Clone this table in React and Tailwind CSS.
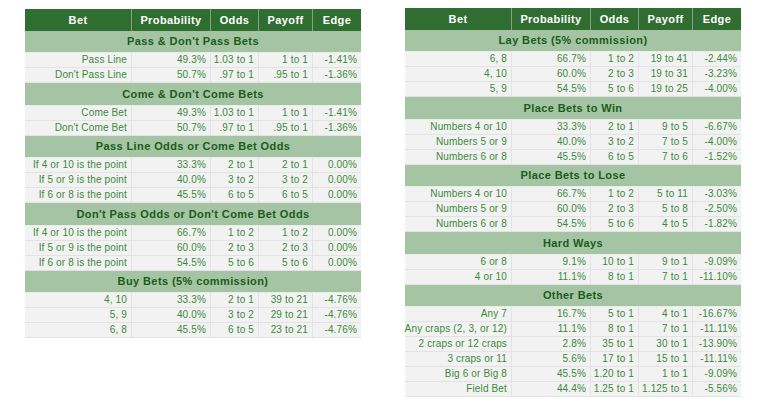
import React from "react";

const left = [
  {
    title: "Pass & Don't Pass Bets",
    rows: [
      ["Pass Line", "49.3%", "1.03 to 1", "1 to 1", "-1.41%"],
      ["Don't Pass Line", "50.7%", ".97 to 1", ".95 to 1", "-1.36%"],
    ],
  },
  {
    title: "Come & Don't Come Bets",
    rows: [
      ["Come Bet", "49.3%", "1.03 to 1", "1 to 1", "-1.41%"],
      ["Don't Come Bet", "50.7%", ".97 to 1", ".95 to 1", "-1.36%"],
    ],
  },
  {
    title: "Pass Line Odds or Come Bet Odds",
    rows: [
      ["If 4 or 10 is the point", "33.3%", "2 to 1", "2 to 1", "0.00%"],
      ["If 5 or 9 is the point", "40.0%", "3 to 2", "3 to 2", "0.00%"],
      ["If 6 or 8 is the point", "45.5%", "6 to 5", "6 to 5", "0.00%"],
    ],
  },
  {
    title: "Don't Pass Odds or Don't Come Bet Odds",
    rows: [
      ["If 4 or 10 is the point", "66.7%", "1 to 2", "1 to 2", "0.00%"],
      ["If 5 or 9 is the point", "60.0%", "2 to 3", "2 to 3", "0.00%"],
      ["If 6 or 8 is the point", "54.5%", "5 to 6", "5 to 6", "0.00%"],
    ],
  },
  {
    title: "Buy Bets (5% commission)",
    rows: [
      ["4, 10", "33.3%", "2 to 1", "39 to 21", "-4.76%"],
      ["5, 9", "40.0%", "3 to 2", "29 to 21", "-4.76%"],
      ["6, 8", "45.5%", "6 to 5", "23 to 21", "-4.76%"],
    ],
  },
];

const right = [
  {
    title: "Lay Bets (5% commission)",
    rows: [
      ["6, 8", "66.7%", "1 to 2", "19 to 41", "-2.44%"],
      ["4, 10", "60.0%", "2 to 3", "19 to 31", "-3.23%"],
      ["5, 9", "54.5%", "5 to 6", "19 to 25", "-4.00%"],
    ],
  },
  {
    title: "Place Bets to Win",
    rows: [
      ["Numbers 4 or 10", "33.3%", "2 to 1", "9 to 5", "-6.67%"],
      ["Numbers 5 or 9", "40.0%", "3 to 2", "7 to 5", "-4.00%"],
      ["Numbers 6 or 8", "45.5%", "6 to 5", "7 to 6", "-1.52%"],
    ],
  },
  {
    title: "Place Bets to Lose",
    rows: [
      ["Numbers 4 or 10", "66.7%", "1 to 2", "5 to 11", "-3.03%"],
      ["Numbers 5 or 9", "60.0%", "2 to 3", "5 to 8", "-2.50%"],
      ["Numbers 6 or 8", "54.5%", "5 to 6", "4 to 5", "-1.82%"],
    ],
  },
  {
    title: "Hard Ways",
    rows: [
      ["6 or 8", "9.1%", "10 to 1", "9 to 1", "-9.09%"],
      ["4 or 10", "11.1%", "8 to 1", "7 to 1", "-11.10%"],
    ],
  },
  {
    title: "Other Bets",
    rows: [
      ["Any 7", "16.7%", "5 to 1", "4 to 1", "-16.67%"],
      ["Any craps (2, 3, or 12)", "11.1%", "8 to 1", "7 to 1", "-11.11%"],
      ["2 craps or 12 craps", "2.8%", "35 to 1", "30 to 1", "-13.90%"],
      ["3 craps or 11", "5.6%", "17 to 1", "15 to 1", "-11.11%"],
      ["Big 6 or Big 8", "45.5%", "1.20 to 1", "1 to 1", "-9.09%"],
      ["Field Bet", "44.4%", "1.25 to 1", "1.125 to 1", "-5.56%"],
    ],
  },
];

const cols = "grid grid-cols-[107px_79px_48px_54px_48px]";
const headers = ["Bet", "Probability", "Odds", "Payoff", "Edge"];

function Table({ sections }) {
  return (
    <div className="w-[336px] flex flex-col">
      <div className={`${cols} h-[22px] bg-[#306d31]`}>
        {headers.map((h, i) => (
          <div
            key={h}
            className={`flex items-center justify-center text-white font-bold text-[11px] tracking-[0.4px] ${
              i < 4 ? "border-r border-[#7fa47f]" : ""
            }`}
          >
            {h}
          </div>
        ))}
      </div>
      {sections.map((s) => (
        <div key={s.title} className="flex flex-col">
          <div className="h-[22.4px] bg-[#a5c4a3] flex items-center justify-center text-[#185e1a] font-bold text-[11px] tracking-[0.4px] border-b border-[#e8efe6]">
            {s.title}
          </div>
          {s.rows.map((r, ri) => (
            <div
              key={ri}
              className={`${cols} h-[15px] bg-[#f2f2f2] border-b border-[#e3e3e3]`}
            >
              {r.map((c, ci) => (
                <div
                  key={ci}
                  className={`flex items-center justify-end pr-[4px] text-[10px] leading-none tracking-[0.15px] text-[#3b8a3b] whitespace-nowrap ${
                    ci < 4 ? "border-r border-[#e3e3e3]" : ""
                  }`}
                >
                  {c}
                </div>
              ))}
            </div>
          ))}
        </div>
      ))}
    </div>
  );
}

export default function App() {
  return (
    <div
      className="w-[768px] h-[405px] bg-white flex items-start gap-[44px] pl-[25px] pt-[8px]"
      style={{ fontFamily: '"Liberation Sans", Arial, sans-serif' }}
    >
      <div className="mt-[1px]">
        <Table sections={left} />
      </div>
      <Table sections={right} />
    </div>
  );
}
